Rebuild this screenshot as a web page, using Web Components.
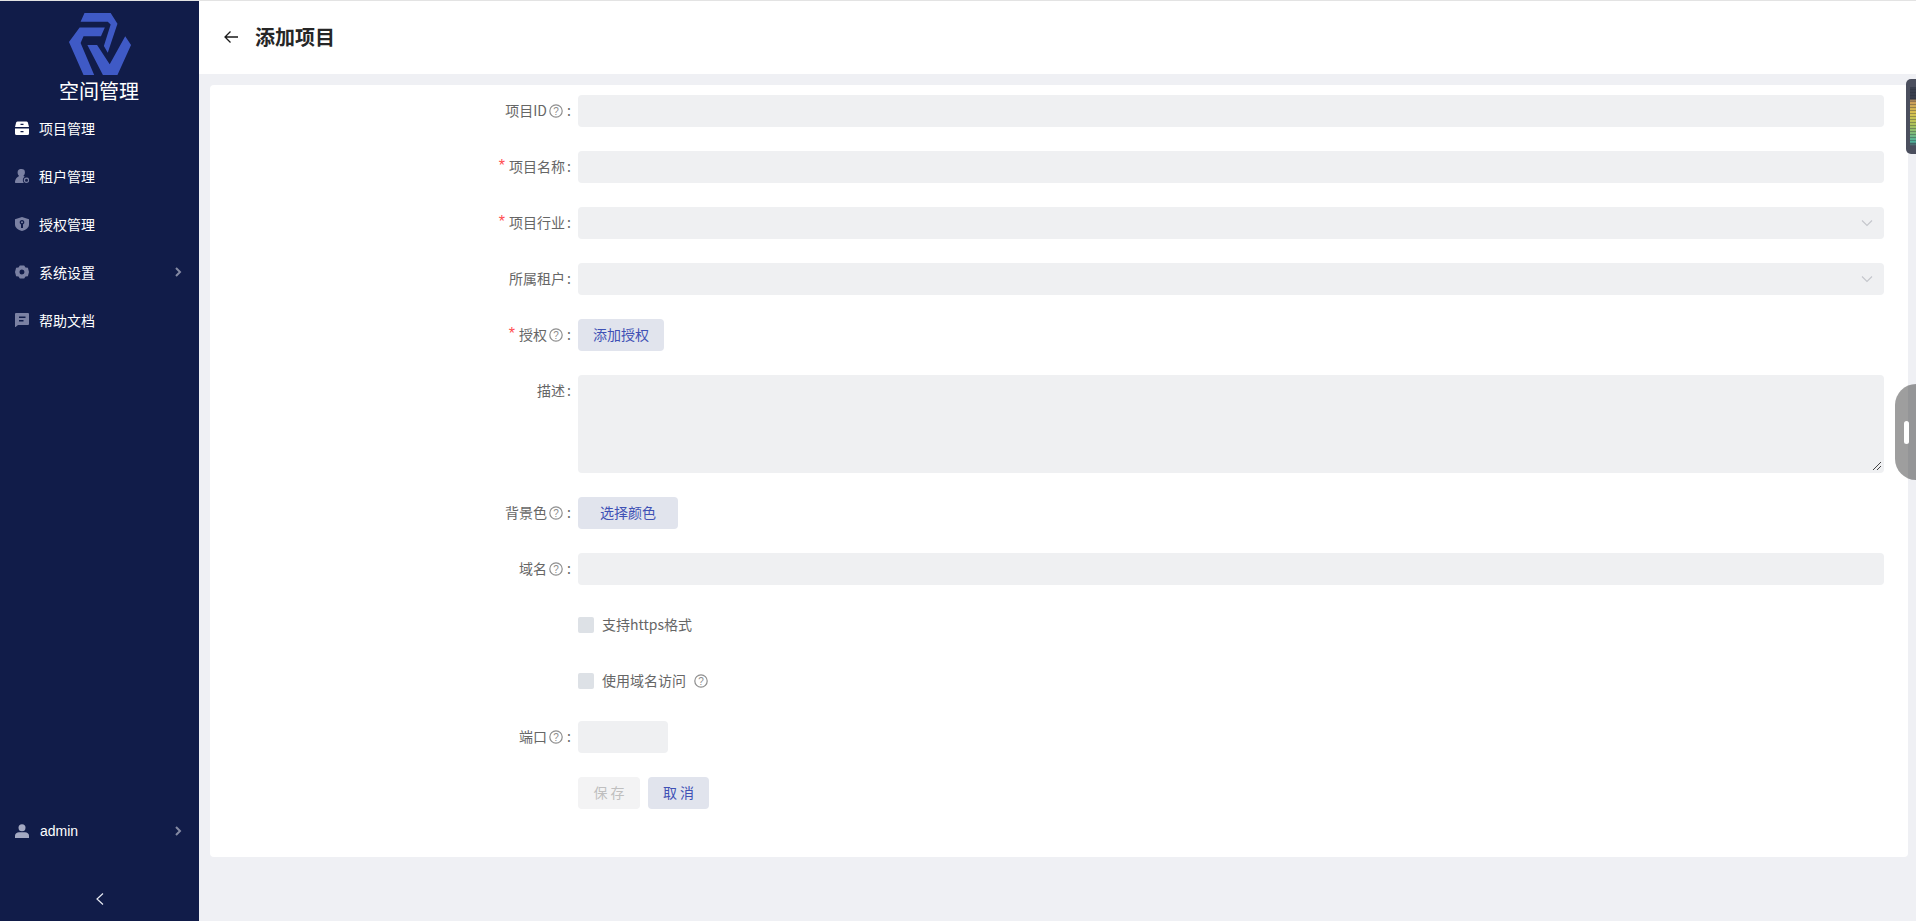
<!DOCTYPE html>
<html lang="zh">
<head>
<meta charset="utf-8">
<title>添加项目</title>
<style>
  html, body{ margin:0; height:100%; overflow:hidden; }
  body{ font-family:"Noto Sans CJK SC","Noto Sans",sans-serif; }
</style>
</head>
<body>
<app-shell>
  <side-bar slot="side">
    <nav-item label="项目管理" icon="drawer" active></nav-item>
    <nav-item label="租户管理" icon="tenant"></nav-item>
    <nav-item label="授权管理" icon="shield"></nav-item>
    <nav-item label="系统设置" icon="gear" arrow></nav-item>
    <nav-item label="帮助文档" icon="doc"></nav-item>
    <nav-item slot="bottom" label="admin" icon="user" arrow bright></nav-item>
  </side-bar>
  <page-header slot="head">添加项目</page-header>
  <form-card>
    <form-row label="项目ID" help><text-box></text-box></form-row>
    <form-row label="项目名称" required><text-box></text-box></form-row>
    <form-row label="项目行业" required><text-box select></text-box></form-row>
    <form-row label="所属租户"><text-box select></text-box></form-row>
    <form-row label="授权" required help><ui-button width="86">添加授权</ui-button></form-row>
    <form-row label="描述" tall><text-box area></text-box></form-row>
    <form-row label="背景色" help><ui-button width="100">选择颜色</ui-button></form-row>
    <form-row label="域名" help><text-box></text-box></form-row>
    <form-row nolabel><check-line>支持https格式</check-line></form-row>
    <form-row nolabel><check-line help>使用域名访问</check-line></form-row>
    <form-row label="端口" help><text-box width="90"></text-box></form-row>
    <form-row nolabel>
      <ui-button width="62" disabled>保 存</ui-button>
      <ui-button width="61">取 消</ui-button>
    </form-row>
  </form-card>
</app-shell>

<script>
const ICONS = {
  drawer:`<path d="M2.500 .5h9a1.500 1.500 0 0 1 1.500 1.500L14 6H0L1 2A1.500 1.500 0 0 1 2.500 .5zM0 7.500h14V12.500A1.500 1.500 0 0 1 12.500 14h-11A1.500 1.500 0 0 1 0 12.500z"/><path d="M5.500 3.400h3M5.500 10.600h3" stroke="#111c49" stroke-width="1.300"/>`,
  tenant:`<path d="M6.500 0a3.400 3.400 0 0 1 3.400 3.600c0 1.400-.7 2.600-1.600 3.400.6.200 1 .5 1.400.8A3.800 3.800 0 0 0 7.800 11c0 1.100.4 2 1 3H.5C0 14-.1 13 .1 12c.4-2.200 1.900-4 4-5-.9-.8-1.500-2-1.500-3.400A3.400 3.400 0 0 1 6.500 0z"/><circle cx="11.500" cy="11.300" r="2.100" fill="none" stroke="currentColor" stroke-width="1.200"/>`,
  shield:`<path fill-rule="evenodd" d="M7 0l7 2.200v5.300c0 3-2.800 5.400-7 6.500-4.200-1.100-7-3.500-7-6.500V2.200zM7 3a2.300 2.300 0 0 0-1 4.400V11h2V7.400A2.300 2.300 0 0 0 7 3zM7 4.300a1 1 0 1 1 0 2 1 1 0 0 1 0-2z"/>`,
  gear:`<path fill-rule="evenodd" d="M4.800 .5h4.400l1.300 2 2.400.2L14 7l-1.100 4.300-2.400.2-1.300 2H4.800l-1.300-2-2.400-.2L0 7l1.100-4.300 2.400-.2zM7 4.500a2.500 2.500 0 1 0 0 5 2.500 2.500 0 0 0 0-5z"/>`,
  doc:`<path fill-rule="evenodd" d="M1 0h12a1 1 0 0 1 1 1v10a1 1 0 0 1-1 1H3L0 14.500V1a1 1 0 0 1 1-1zM4 3.500V5h6.500V3.500zM4 7v1.500h4.500V7z"/>`,
  user:`<circle cx="7" cy="3.700" r="3.500"/><path d="M0 14v-2.500C0 9.500 2 8.200 4 8.200h6c2 0 4 1.300 4 3.300V14z"/>`
};

class AppShell extends HTMLElement{
  constructor(){
    super();
    const shadowRoot = this.attachShadow({mode:'open'});
    shadowRoot.innerHTML = `
      <style>
        :host{
          display:flex;
          height:921px;
          box-sizing:border-box;
          border-top:1px solid #e3e3e3;
          background:#eff0f4;
        }
        #main{
          flex:1;
          min-width:0;
          display:flex;
          flex-direction:column;
          position:relative;
        }
        #body{
          padding:11px 8px 0 11px;
        }
        #dock{
          position:absolute;
          right:0;
          top:78px;
          width:10px;
          height:75px;
          box-sizing:border-box;
          border-radius:5px 0 0 5px;
          background:#4b4f5e;
          padding:8px 0 8px 4px;
        }
        #dock i{
          display:block;
          height:100%;
          background:repeating-linear-gradient(transparent 0 2px,rgba(40,44,56,.35) 2px 3px),linear-gradient(#3a3f4e 0 20%,#c99a5b 24%,#d8c24e 45%,#a8c25a 65%,#4fb39a 92%,#4b4f5e 100%);
        }
        #grip{
          position:absolute;
          right:0;
          top:383px;
          width:21px;
          height:96px;
          border-radius:21px 0 0 21px;
          background:rgba(0,0,0,.38);
        }
        #grip i{
          position:absolute;
          left:9px;
          top:37px;
          width:5px;
          height:23px;
          border-radius:3px;
          background:#fff;
        }
      </style>
      <slot name="side"></slot>
      <div id="main">
        <slot name="head"></slot>
        <div id="body"><slot></slot></div>
        <div id="dock"><i></i></div>
        <div id="grip"><i></i></div>
      </div>
    `;
  }
}

class SideBar extends HTMLElement{
  constructor(){
    super();
    const shadowRoot = this.attachShadow({mode:'open'});
    shadowRoot.innerHTML = `
      <style>
        :host{
          display:flex;
          flex-direction:column;
          flex:none;
          width:199px;
          background:#111c49;
          color:#fff;
        }
        #logo{
          height:104px;
          display:flex;
          flex-direction:column;
          align-items:center;
          box-sizing:border-box;
          padding-top:11px;
        }
        #logo svg{ display:block; }
        #logo span{
          font-size:20px;
          line-height:28px;
          margin-top:1px;
          margin-left:-1px;
        }
        #nav{ flex:1; }
        #fold{
          height:65px;
          display:flex;
          justify-content:center;
          align-items:center;
          padding-top:21px;
          box-sizing:border-box;
        }
      </style>
      <div id="logo">
        <svg width="66" height="66" viewBox="66 11 66 66" fill="#3f5ac6">
          <path d="M83 12h27l7 11-10 30-4-7 7-22-3-3H79z"/>
          <path d="M104 27H78l-11 15 15 34h11L79 43l3-7h18z"/>
          <path d="M86 45h10l13 20 16-29 6 9-14 31h-15z"/>
        </svg>
        <span>空间管理</span>
      </div>
      <div id="nav"><slot></slot></div>
      <slot name="bottom"></slot>
      <div id="fold">
        <svg width="10" height="14" viewBox="0 0 10 14" fill="none" stroke="#e8eaf2" stroke-width="1.200"><path d="M8 1.500L2 7l6 5.500"/></svg>
      </div>
    `;
  }
}

class NavItem extends HTMLElement{
  constructor(){
    super();
    this.attachShadow({mode:'open'});
  }
  connectedCallback(){
    const icon = ICONS[this.getAttribute('icon')] || '';
    const arrow = this.hasAttribute('arrow') ? `
      <svg id="arrow" width="8" height="10" viewBox="0 0 8 10" fill="none" stroke="#858aa3" stroke-width="2"><path d="M2 1l4 4-4 4"/></svg>` : '';
    this.shadowRoot.innerHTML = `
      <style>
        :host{
          display:flex;
          align-items:center;
          height:48px;
          padding:0 17px 2px 15px;
          box-sizing:border-box;
          font-size:14px;
          color:#fff;
        }
        #icon{
          width:14px;
          height:14px;
          flex:none;
          margin-right:10px;
          color:#7b81a3;
          fill:currentColor;
        }
        :host([active]) #icon{ color:#fff; }
        :host([bright]) #icon{ color:#a4a9c2; }
        span{ flex:1; }
        :host([bright]) span{ font-family:"Liberation Sans","Noto Sans",sans-serif; padding-left:1px; }
      </style>
      <svg id="icon" viewBox="0 0 14 14">${icon}</svg>
      <span>${this.getAttribute('label')}</span>
      ${arrow}
    `;
  }
}

class PageHeader extends HTMLElement{
  constructor(){
    super();
    const shadowRoot = this.attachShadow({mode:'open'});
    shadowRoot.innerHTML = `
      <style>
        :host{
          display:flex;
          align-items:center;
          height:73px;
          box-sizing:border-box;
          padding:0 0 1px 25px;
          background:#fff;
          color:#262626;
        }
        svg{ margin-right:17px; flex:none; }
        span{
          font-size:20px;
          font-weight:700;
          line-height:28px;
        }
      </style>
      <svg width="14" height="14" viewBox="0 0 14 14" fill="none" stroke="#1a1a1a" stroke-width="1.300"><path d="M14 7H1M6.500 1.500L1 7l5.500 5.500"/></svg>
      <span><slot></slot></span>
    `;
  }
}

class FormCard extends HTMLElement{
  constructor(){
    super();
    const shadowRoot = this.attachShadow({mode:'open'});
    shadowRoot.innerHTML = `
      <style>
        :host{
          display:flex;
          flex-direction:column;
          gap:24px;
          height:772px;
          box-sizing:border-box;
          padding:10px 24px 0 0;
          background:#fff;
          border-radius:4px;
        }
      </style>
      <slot></slot>
    `;
  }
}

class HelpIcon extends HTMLElement{
  constructor(){
    super();
    const shadowRoot = this.attachShadow({mode:'open'});
    shadowRoot.innerHTML = `
      <style>
        :host{ display:inline-flex; width:14px; height:14px; }
        text{ font-family:"Liberation Sans",sans-serif; font-size:10px; fill:#8c8c8c; }
      </style>
      <svg width="14" height="14" viewBox="0 0 14 14">
        <circle cx="7" cy="7" r="6.200" fill="none" stroke="#8f8f8f" stroke-width="1.200"/>
        <text x="7" y="10.500" text-anchor="middle">?</text>
      </svg>
    `;
  }
}

class FormRow extends HTMLElement{
  constructor(){
    super();
    this.attachShadow({mode:'open'});
  }
  connectedCallback(){
    const required = this.hasAttribute('required') ? '<b>*</b>' : '';
    const help = this.hasAttribute('help') ? '<help-icon></help-icon>' : '';
    const label = this.hasAttribute('nolabel') ? '' : `${required}<span>${this.getAttribute('label')}</span>${help}<em>:</em>`;
    this.shadowRoot.innerHTML = `
      <style>
        :host{
          display:flex;
          align-items:flex-start;
          min-height:32px;
          font-size:14px;
          color:#666;
        }
        #label{
          flex:none;
          width:368px;
          height:32px;
          box-sizing:border-box;
          padding:0 6px 2px 0;
          display:flex;
          align-items:center;
          justify-content:flex-end;
        }
        b{
          color:#ff4d4f;
          font-weight:400;
          font-family:"Liberation Sans",sans-serif;
          margin-right:4px;
          font-size:16px;
        }
        help-icon{ margin:2px 2px 0 2px; }
        em{
          font-style:normal;
          margin-left:2px;
          width:5px;
        }
        #field{
          flex:1;
          min-width:0;
          display:flex;
          gap:8px;
        }
      </style>
      <div id="label">${label}</div>
      <div id="field"><slot></slot></div>
    `;
  }
}

class TextBox extends HTMLElement{
  constructor(){
    super();
    this.attachShadow({mode:'open'});
  }
  connectedCallback(){
    const w = this.getAttribute('width');
    const extra = this.hasAttribute('select') ? `
      <svg id="caret" width="12" height="8" viewBox="0 0 12 8" fill="none" stroke="#c4c6cc" stroke-width="1.100"><path d="M1 1.500l5 5 5-5"/></svg>` :
      this.hasAttribute('area') ? `
      <svg id="grab" width="10" height="10" viewBox="0 0 10 10" fill="none" stroke="#444" stroke-width="1"><path d="M1 9l8-8M5 9l4-4"/></svg>` : '';
    this.shadowRoot.innerHTML = `
      <style>
        :host{
          display:block;
          position:relative;
          flex:${w ? 'none' : '1'};
          ${w ? `width:${w}px;` : ''}
          height:32px;
          background:#eff0f2;
          border-radius:4px;
        }
        :host([area]){ height:98px; }
        #caret{ position:absolute; right:11px; top:12px; }
        #grab{ position:absolute; right:2px; bottom:2px; }
      </style>
      ${extra}
    `;
  }
}

class UiButton extends HTMLElement{
  constructor(){
    super();
    this.attachShadow({mode:'open'});
  }
  connectedCallback(){
    this.shadowRoot.innerHTML = `
      <style>
        :host{
          display:flex;
          align-items:center;
          justify-content:center;
          flex:none;
          width:${this.getAttribute('width')}px;
          height:32px;
          box-sizing:border-box;
          padding-bottom:2px;
          font-size:14px;
          color:#3f51b5;
          background:#e1e4ed;
          border-radius:4px;
        }
        :host([disabled]){
          color:#bfbfbf;
          background:#f3f3f4;
        }
      </style>
      <slot></slot>
    `;
  }
}

class CheckLine extends HTMLElement{
  constructor(){
    super();
    this.attachShadow({mode:'open'});
  }
  connectedCallback(){
    const help = this.hasAttribute('help') ? '<help-icon></help-icon>' : '';
    this.shadowRoot.innerHTML = `
      <style>
        :host{
          display:flex;
          align-items:center;
          height:32px;
          font-size:14px;
          color:#666;
        }
        i{
          width:16px;
          height:16px;
          border-radius:2px;
          background:#dde1e6;
          margin-right:8px;
        }
        span{ padding-bottom:2px; }
        help-icon{ margin-left:8px; }
      </style>
      <i></i><span><slot></slot></span>${help}
    `;
  }
}

customElements.define('help-icon', HelpIcon);
customElements.define('app-shell', AppShell);
customElements.define('side-bar', SideBar);
customElements.define('nav-item', NavItem);
customElements.define('page-header', PageHeader);
customElements.define('form-card', FormCard);
customElements.define('form-row', FormRow);
customElements.define('text-box', TextBox);
customElements.define('ui-button', UiButton);
customElements.define('check-line', CheckLine);
</script>
</body>
</html>
